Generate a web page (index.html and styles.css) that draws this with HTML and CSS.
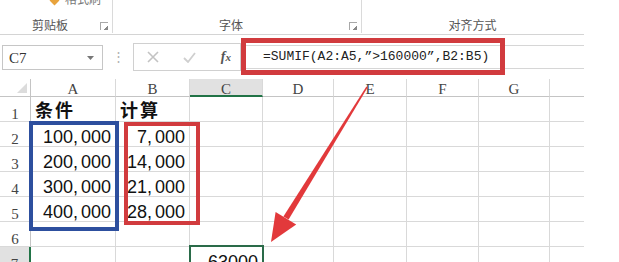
FILE: index.html
```html
<!DOCTYPE html>
<html lang="zh-CN">
<head>
    <meta charset="UTF-8">
    <meta name="viewport" content="width=device-width, initial-scale=1.0">
    <title>SUMIF</title>
    <link rel="stylesheet" href="styles.css">
</head>
<body>
    <div class="sheet-window">
        <div class="ribbon">
            <div class="group group-clip">
                <div class="tools">
                    <span class="brush"></span>
                    <span class="cut-text">格式刷</span>
                </div>
                <div class="group-label"><span>剪贴板</span><i class="launcher"></i></div>
            </div>
            <div class="group group-font">
                <div class="tools"></div>
                <div class="group-label"><span>字体</span><i class="launcher"></i></div>
            </div>
            <div class="group group-align">
                <div class="tools"></div>
                <div class="group-label"><span>对齐方式</span></div>
            </div>
        </div>

        <div class="formula-bar">
            <div class="name-box">
                <span>C7</span>
                <svg width="9" height="6" viewBox="0 0 9 6"><path d="M1 1h7L4.5 5z" fill="#777"/></svg>
            </div>
            <div class="grip">⋮</div>
            <div class="fx-box">
                <svg width="12" height="12" viewBox="0 0 12 12"><path d="M1 1l10 10M11 1L1 11" stroke="#c3c3c3" stroke-width="1.6"/></svg>
                <svg width="13" height="11" viewBox="0 0 13 11"><path d="M1 6l4 4 7-9" stroke="#cfcfcf" stroke-width="1.8" fill="none"/></svg>
                <span class="fx">f<small>x</small></span>
            </div>
            <div class="formula-input">=SUMIF(A2:A5,”&gt;160000”,B2:B5)</div>
        </div>

        <div class="grid">
            <div class="corner"><i></i></div>
            <div class="col-head">A</div>
            <div class="col-head">B</div>
            <div class="col-head active">C</div>
            <div class="col-head">D</div>
            <div class="col-head">E</div>
            <div class="col-head">F</div>
            <div class="col-head">G</div>
            <div class="col-head last"></div>

            <div class="row-head">1</div>
            <div class="cell title">条件</div>
            <div class="cell title">计算</div>
            <div class="cell"></div><div class="cell"></div><div class="cell"></div><div class="cell"></div><div class="cell"></div><div class="cell last"></div>

            <div class="row-head">2</div>
            <div class="cell num">100<span class="sep">,</span>000</div>
            <div class="cell num">7<span class="sep">,</span>000</div>
            <div class="cell"></div><div class="cell"></div><div class="cell"></div><div class="cell"></div><div class="cell"></div><div class="cell last"></div>

            <div class="row-head">3</div>
            <div class="cell num">200<span class="sep">,</span>000</div>
            <div class="cell num">14<span class="sep">,</span>000</div>
            <div class="cell"></div><div class="cell"></div><div class="cell"></div><div class="cell"></div><div class="cell"></div><div class="cell last"></div>

            <div class="row-head">4</div>
            <div class="cell num">300<span class="sep">,</span>000</div>
            <div class="cell num">21<span class="sep">,</span>000</div>
            <div class="cell"></div><div class="cell"></div><div class="cell"></div><div class="cell"></div><div class="cell"></div><div class="cell last"></div>

            <div class="row-head">5</div>
            <div class="cell num">400<span class="sep">,</span>000</div>
            <div class="cell num">28<span class="sep">,</span>000</div>
            <div class="cell"></div><div class="cell"></div><div class="cell"></div><div class="cell"></div><div class="cell"></div><div class="cell last"></div>

            <div class="row-head">6</div>
            <div class="cell"></div><div class="cell"></div><div class="cell"></div><div class="cell"></div><div class="cell"></div><div class="cell"></div><div class="cell"></div><div class="cell last"></div>

            <div class="row-head active">7</div>
            <div class="cell"></div>
            <div class="cell"></div>
            <div class="cell num">63000</div>
            <div class="cell"></div><div class="cell"></div><div class="cell"></div><div class="cell"></div><div class="cell last"></div>
        </div>

        <!-- annotations drawn over the sheet -->
        <div class="mark mark-formula"></div>
        <div class="mark mark-blue"></div>
        <div class="mark mark-red"></div>
        <div class="mark mark-active"></div>
        <svg class="arrow" width="619" height="262" viewBox="0 0 619 262">
            <polygon points="367.6,87.4 366.4,86.6 283.4,216.4 288.6,219.6" fill="#e2393b"/>
            <polygon points="271,242 275.6,211.9 296.2,224.5" fill="#e2393b"/>
        </svg>
    </div>
</body>
</html>
```

FILE: styles.css
```css
:root {
  --grid-line: #d9d9d9;
  --head-line: #c4c4c4;
  --head-text: #444444;
  --excel-green: #217346;
  --mark-red: #d13b3e;
  --mark-blue: #2d4f9e;
}

html, body {
  margin: 0;
  height: 262px;
  overflow: hidden;
  background: #ffffff;
}

.sheet-window {
  position: relative;
  width: 619px;
  height: 262px;
  overflow: hidden;
  font-family: "Noto Sans CJK SC", "Noto Sans", sans-serif;
}

/* ribbon */
.ribbon {
  display: flex;
  height: 34px;
  border-bottom: 1px solid #d4d4d4;
  width: 584px;
}

.group {
  display: flex;
  flex-direction: column;
  border-right: 1px solid #dadada;
  height: 33px;
}

.group-clip { width: 112px; }
.group-font { width: 248px; }
.group-align { width: 221px; border-right: none; }

.tools {
  position: relative;
  height: 15px;
  overflow: hidden;
}

.brush {
  position: absolute;
  left: 51px;
  top: -3px;
  width: 7px;
  height: 7px;
  background: #e8a33c;
  transform: rotate(45deg);
}

.cut-text {
  position: absolute;
  left: 65px;
  top: -10px;
  font-size: 12px;
  color: #777;
}

.group-label {
  display: flex;
  align-items: center;
  height: 18px;
  font-size: 12px;
  color: #555;
}

.group-label span {
  flex: 1;
  text-align: center;
}

.launcher {
  width: 7px;
  height: 7px;
  margin: 4px 4px 0 0;
  border: 1px solid #a8a8a8;
  border-width: 1px 0 0 1px;
  position: relative;
}

.launcher::after {
  content: "";
  position: absolute;
  right: 0;
  bottom: 0;
  width: 4px;
  height: 4px;
  background: linear-gradient(135deg, transparent 45%, #888 50%);
}

/* formula bar */
.formula-bar {
  display: flex;
  align-items: center;
  height: 44px;
  width: 584px;
  font-family: "Liberation Mono", monospace;
}

.name-box {
  display: flex;
  align-items: center;
  justify-content: space-between;
  box-sizing: border-box;
  width: 101px;
  height: 25px;
  margin-left: 2px;
  padding: 2px 7px 0 6px;
  border: 1px solid #c6c6c6;
  font-family: "Liberation Serif", serif;
  font-size: 15px;
  color: #333;
}

.grip {
  width: 30px;
  text-align: center;
  color: #b0b0b0;
  font-size: 13px;
}

.fx-box {
  display: flex;
  align-items: center;
  justify-content: space-between;
  box-sizing: border-box;
  width: 108px;
  height: 28px;
  padding: 0 9px 0 13px;
  border: 1px solid #d0d0d0;
}

.fx {
  font-family: "Liberation Serif", serif;
  font-style: italic;
  font-weight: bold;
  font-size: 14px;
  color: #555;
}

.fx small {
  font-size: 11px;
}

.formula-input {
  flex: 1;
  box-sizing: border-box;
  height: 24px;
  padding: 3px 0 0 22px;
  border-top: 1px solid #d6d6d6;
  border-bottom: 1px solid #d6d6d6;
  font-size: 13px;
  color: #222;
  white-space: nowrap;
}

/* sheet grid */
.grid {
  display: grid;
  grid-template-columns: 31px 85px 74px 73px 71px 73px 72px 71px 34px;
  grid-template-rows: 18px repeat(7, 25px);
  width: 584px;
}

.grid > div {
  box-sizing: border-box;
  border-right: 1px solid var(--grid-line);
  border-bottom: 1px solid var(--grid-line);
  overflow: visible;
  white-space: nowrap;
}

.grid > .last {
  border-right: none;
}

.corner {
  position: relative;
  border-color: var(--head-line) !important;
}

.corner i {
  position: absolute;
  right: 3px;
  bottom: 3px;
  width: 0;
  height: 0;
  border-left: 10px solid transparent;
  border-bottom: 10px solid #dcdcdc;
}

.col-head {
  text-align: center;
  font-family: "Liberation Serif", serif;
  font-size: 15px;
  line-height: 15px;
  padding-top: 3px;
  color: var(--head-text);
  border-bottom-color: var(--head-line) !important;
}

.col-head.active {
  background: #e1e1e1;
  border-bottom: 2px solid var(--excel-green) !important;
}

.row-head {
  text-align: center;
  font-family: "Liberation Serif", serif;
  font-size: 15px;
  line-height: 16px;
  padding-top: 9px;
  color: var(--head-text);
  border-right-color: var(--head-line) !important;
}

.row-head.active {
  background: #e1e1e1;
  border-right: 2px solid var(--excel-green) !important;
}

.cell.title {
  padding: 1px 0 0 4px;
  font-family: "Noto Sans CJK SC", sans-serif;
  font-weight: bold;
  font-size: 18px;
  line-height: 22px;
  letter-spacing: 2px;
  color: #111;
}

.cell.num {
  text-align: right;
  padding: 5px 4px 0 0;
  font-family: "Liberation Sans", sans-serif;
  font-size: 18px;
  line-height: 20px;
  color: #111;
}

.sep {
  margin-right: 3px;
}

/* annotations */
.mark {
  position: absolute;
  box-sizing: border-box;
  pointer-events: none;
}

.mark-formula {
  left: 241px;
  top: 38px;
  width: 264px;
  height: 37px;
  border: 5px solid var(--mark-red);
}

.mark-blue {
  left: 29px;
  top: 121px;
  width: 90px;
  height: 110px;
  border: 4px solid var(--mark-blue);
}

.mark-red {
  left: 124px;
  top: 122px;
  width: 76px;
  height: 103px;
  border: 4px solid var(--mark-red);
}

.mark-active {
  left: 189px;
  top: 245px;
  width: 75px;
  height: 30px;
  border: 2px solid #2a6b49;
}

.arrow {
  position: absolute;
  left: 0;
  top: 0;
  pointer-events: none;
}
```
